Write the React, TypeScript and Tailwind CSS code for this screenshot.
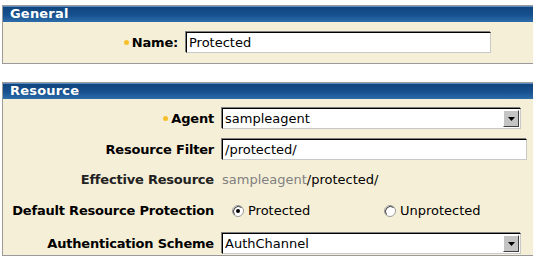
import React from "react";

const font = { fontFamily: '"DejaVu Sans", Verdana, sans-serif' };

function Bullet() {
  return <span className="inline-block w-[5px] h-[5px] rounded-full bg-[#f5c02a] mr-[3px] mb-[1px]" />;
}

function Header({ title }: { title: string }) {
  return (
    <div className="h-[16px] leading-[16px] pl-[7px] text-white font-bold text-[13px] tracking-[0.2px] bg-[linear-gradient(to_bottom,#5b8bc0_0px,#5b8bc0_1px,#10457e_1px,#16508e_55%,#2d6daa_100%)]">
      {title}
    </div>
  );
}

function TextInput({ value, width }: { value: string; width: number }) {
  return (
    <div
      className="h-[21px] bg-white border-[1px] border-t-black border-l-black border-b-[#c8c8c8] border-r-[#c8c8c8] shadow-[-1px_-1px_0_#808080] text-[13px] leading-[19px] pl-[2px] text-black overflow-hidden whitespace-nowrap"
      style={{ width }}
    >
      {value}
    </div>
  );
}

function Select({ value }: { value: string }) {
  return (
    <div className="w-[299px] h-[21px] bg-white border-[1px] border-t-black border-l-black border-b-[#c8c8c8] border-r-[#c8c8c8] shadow-[-1px_-1px_0_#808080] flex items-center justify-between text-[13px] leading-[19px] pl-[2px] text-black">
      <span>{value}</span>
      <div className="w-[16px] h-[17px] mr-[1px] bg-[#c4c4c4] border-[1px] border-t-white border-l-white border-b-[#404040] border-r-[#404040] flex items-center justify-center">
        <svg width="7" height="4" viewBox="0 0 7 4">
          <path d="M0 0h7L3.5 4z" fill="#000" />
        </svg>
      </div>
    </div>
  );
}

function Radio({ checked }: { checked: boolean }) {
  return (
    <svg width="12" height="12" viewBox="0 0 12 12" className="shrink-0">
      <circle cx="6" cy="6" r="5.5" fill="#fff" stroke="#9a9a9a" />
      <path d="M2.5 9.5A5 5 0 0 1 9.5 2.5" stroke="#404040" strokeWidth="1" fill="none" />
      {checked && <circle cx="6" cy="6" r="2" fill="#000" />}
    </svg>
  );
}

export default function App() {
  return (
    <div className="w-[533px] h-[265px] bg-white overflow-hidden pt-[5px] text-black" style={font}>
      {/* General */}
      <div className="ml-[2px] w-[545px] border-[1px] border-[#9a9a9a] border-r-0">
        <Header title="General" />
        <div className="bg-[#f6efd7] h-[41px] flex items-center">
          <div className="w-[175px] flex items-center justify-end text-[13px] font-bold tracking-[-0.2px]">
            <Bullet />
            <span>Name:</span>
          </div>
          <div className="ml-[8px]">
            <TextInput value="Protected" width={305} />
          </div>
        </div>
      </div>

      {/* Resource */}
      <div className="ml-[2px] mt-[18px] w-[545px] border-[1px] border-[#9a9a9a] border-r-0">
        <Header title="Resource" />
        <div className="bg-[#f6efd7] h-[156px] pt-[9px] text-[13px]">
          <div className="flex items-center h-[21px]">
            <div className="w-[211px] flex items-center justify-end font-bold tracking-[-0.2px]">
              <Bullet />
              <span>Agent</span>
            </div>
            <div className="ml-[8px]">
              <Select value="sampleagent" />
            </div>
          </div>
          <div className="flex items-center h-[21px] mt-[10px]">
            <div className="w-[211px] text-right font-bold tracking-[-0.2px]">Resource Filter</div>
            <div className="ml-[8px]">
              <TextInput value="/protected/" width={305} />
            </div>
          </div>
          <div className="flex items-center h-[21px] mt-[9px]">
            <div className="w-[211px] text-right font-bold tracking-[-0.2px] text-[#222]">Effective Resource</div>
            <div className="ml-[8px]">
              <span className="text-[#808080]">sampleagent</span>
              <span>/protected/</span>
            </div>
          </div>
          <div className="flex items-center h-[21px] mt-[10px]">
            <div className="w-[211px] text-right font-bold tracking-[-0.2px]">Default Resource Protection</div>
            <div className="ml-[8px] flex items-center">
              <div className="ml-[10px] flex items-center gap-[4px] w-[152px]">
                <Radio checked />
                <span>Protected</span>
              </div>
              <div className="flex items-center gap-[4px]">
                <Radio checked={false} />
                <span>Unprotected</span>
              </div>
            </div>
          </div>
          <div className="flex items-center h-[21px] mt-[12px]">
            <div className="w-[211px] text-right font-bold tracking-[-0.2px]">Authentication Scheme</div>
            <div className="ml-[8px]">
              <Select value="AuthChannel" />
            </div>
          </div>
        </div>
      </div>
    </div>
  );
}
